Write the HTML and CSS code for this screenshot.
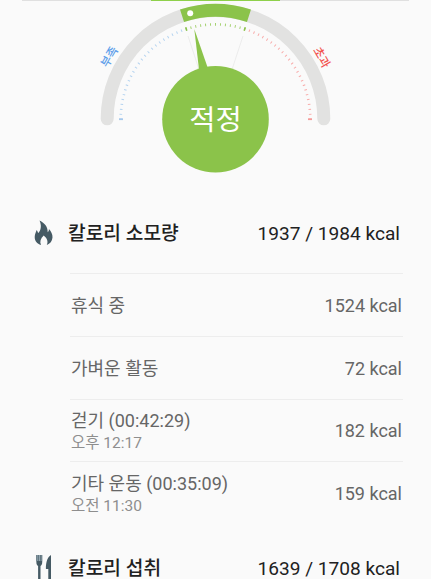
FILE: index.html
```html
<!DOCTYPE html>
<html lang="ko">

<head>
    <meta charset="UTF-8">
    <title>칼로리</title>
    <link rel="stylesheet" href="styles.css">
</head>

<body>
    <div class="tab-line"><span class="tab-active"></span></div>

    <!-- 게이지 -->
    <svg class="gauge" width="431" height="199" viewBox="0 1 431 199">
        <path class="track" d="M107.2 118.8A108.3 108.3 0 0 1 323.8 118.8"/>
        <path class="range" d="M182.03 15.8A108.3 108.3 0 0 1 248.97 15.8"/>
        <circle cx="190.2" cy="13.3" r="3" fill="#fff"/>

        <!-- 눈금 -->
        <path class="ticks low" pathLength="24" d="M120.7 119.2A94.8 94.8 0 0 1 186.2 29.04"/>
        <path class="ticks fit" pathLength="12" d="M186.2 29.04A94.8 94.8 0 0 1 244.8 29.04"/>
        <path class="ticks high" pathLength="24" d="M244.8 29.04A94.8 94.8 0 0 1 310.3 119.2"/>
        <path d="M119 119.2h4" stroke="#a5c8ec" stroke-width="1.8"/>
        <path d="M308 119.2h4" stroke="#f59a98" stroke-width="1.8"/>
        <path d="M185.7 27.3l1.1 3.4M245.3 27.3l-1.1 3.4" stroke="#8bc34a" stroke-width="1.6"/>
        <path d="M188 36l10.5 32M243 36l-10.5 32" stroke="#e8e8e8" stroke-width=".8"/>

        <path d="M194.3 29L199.3 72L208.5 70Z" fill="#8bc34a"/>
        <circle cx="215.5" cy="119.2" r="53.3" fill="#8bc34a"/>
        <text class="state" x="215.5" y="130.2">적정</text>
        <text class="label label-low" transform="translate(109.3 56.8) rotate(-60)" y="4.2">부족</text>
        <text class="label label-high" transform="translate(321.7 57.3) rotate(60)" y="4.2">초과</text>
    </svg>

    <!-- 칼로리 소모량 -->
    <div class="title">
        <svg class="icon" width="22" height="28" viewBox="0 0 22 28">
            <path fill="#455a64" d="M6.5 1.5C11.8 4 14.8 8 14.7 13.2C15.8 12.4 16 11 15.9 9.9C18 12.2 19.8 15.3 19.5 18.6C19.2 22.3 17.1 24.8 13.8 26C15.3 22.7 14.5 19.5 10.7 16.4C7.5 19.3 6.5 22.7 8 26C4 24.8 1.7 22 1.7 18C1.7 15 3 13.1 3.7 11C4.4 12 4.7 13.3 5.4 14.1C8.2 10.8 8.7 6.2 6.5 1.5Z"/>
        </svg>
        <h2>칼로리 소모량</h2>
        <span class="total">1937 / 1984 kcal</span>
    </div>

    <ul class="list">
        <li>
            <div class="name">휴식 중</div>
            <span class="kcal">1524 kcal</span>
        </li>
        <li>
            <div class="name">가벼운 활동</div>
            <span class="kcal">72 kcal</span>
        </li>
        <li>
            <div class="name">걷기 (00:42:29)<small>오후 12:17</small></div>
            <span class="kcal">182 kcal</span>
        </li>
        <li>
            <div class="name">기타 운동 (00:35:09)<small>오전 11:30</small></div>
            <span class="kcal">159 kcal</span>
        </li>
    </ul>

    <!-- 칼로리 섭취 -->
    <div class="title">
        <svg class="icon" width="22" height="28" viewBox="0 0 22 28">
            <path fill="#90a4ae" d="M3.4 1h5.8v6.5H3.4Z"/>
            <path fill="#455a64" d="M3.4 1h.8v6h1.2V1h.6v6h1V1h.6v6h1V1h.6v7.5c0 2-.9 3-1.7 3.4V28H5.1V11.9C4.2 11.5 3.4 10.5 3.4 8.5Z"/>
            <path fill="#455a64" d="M18 1V28h-2.7V15h-2.4C12.8 8.5 14.4 3 18 1Z"/>
        </svg>
        <h2>칼로리 섭취</h2>
        <span class="total">1639 / 1708 kcal</span>
    </div>
</body>

</html>
```
FILE: styles.css
```css
body {
    margin: 0;
    height: 579px;
    overflow: hidden;
    background-color: #fafafa;
    font-family: Roboto, "Noto Sans CJK KR", sans-serif;
    color: #212121;
}

.tab-line {
    display: flex;
    justify-content: center;
    height: 1px;
    margin: 0 22px;
    background-color: #e0e0e0;
}

.tab-active {
    width: 129px;
    background-color: #8ed04b;
}

.gauge {
    display: block;
}

.gauge path {
    fill: none;
}

.gauge path[fill] {
    fill: #8bc34a;
}

.track {
    stroke: #e2e2e1;
    stroke-width: 13;
    stroke-linecap: round;
}

.range {
    stroke: #8bc34a;
    stroke-width: 13;
}

/* 눈금 한 칸 = 3도 */
.ticks {
    stroke-width: 2.6;
    stroke-dasharray: .2 .8;
    stroke-dashoffset: .1;
}

.low {
    stroke: #b4d3f0;
}

.fit {
    stroke: #a5d171;
}

.high {
    stroke: #f8aaa9;
}

.state {
    font-size: 28.5px;
    fill: #fff;
    text-anchor: middle;
}

.label {
    font-size: 11.8px;
    font-weight: 500;
    text-anchor: middle;
}

.label-low {
    fill: #5c9eea;
}

.label-high {
    fill: #f2524e;
}

.title {
    display: flex;
    align-items: center;
    height: 66px;
    padding: 0 31px 0 33px;
}

.icon {
    margin-right: 13px;
}

h2 {
    flex: 1;
    margin: 0;
    padding-top: 2px;
    font-size: 19.2px;
    line-height: 22px;
    font-weight: 500;
}

.total {
    font-size: 19.1px;
}

.list {
    margin: 7px 28px 11px 70px;
    padding: 0;
    list-style: none;
    color: #666;
}

.list li {
    display: flex;
    align-items: center;
    justify-content: space-between;
    box-sizing: border-box;
    height: 62.8px;
    padding: 1px 1px 0;
    border-top: 1px solid #ededed;
    font-size: 18px;
}

.name {
    padding-top: 2px;
    line-height: 24px;
}

.name small {
    display: block;
    font-size: 15.5px;
    line-height: 21px;
    color: #8e8e8e;
}
```
